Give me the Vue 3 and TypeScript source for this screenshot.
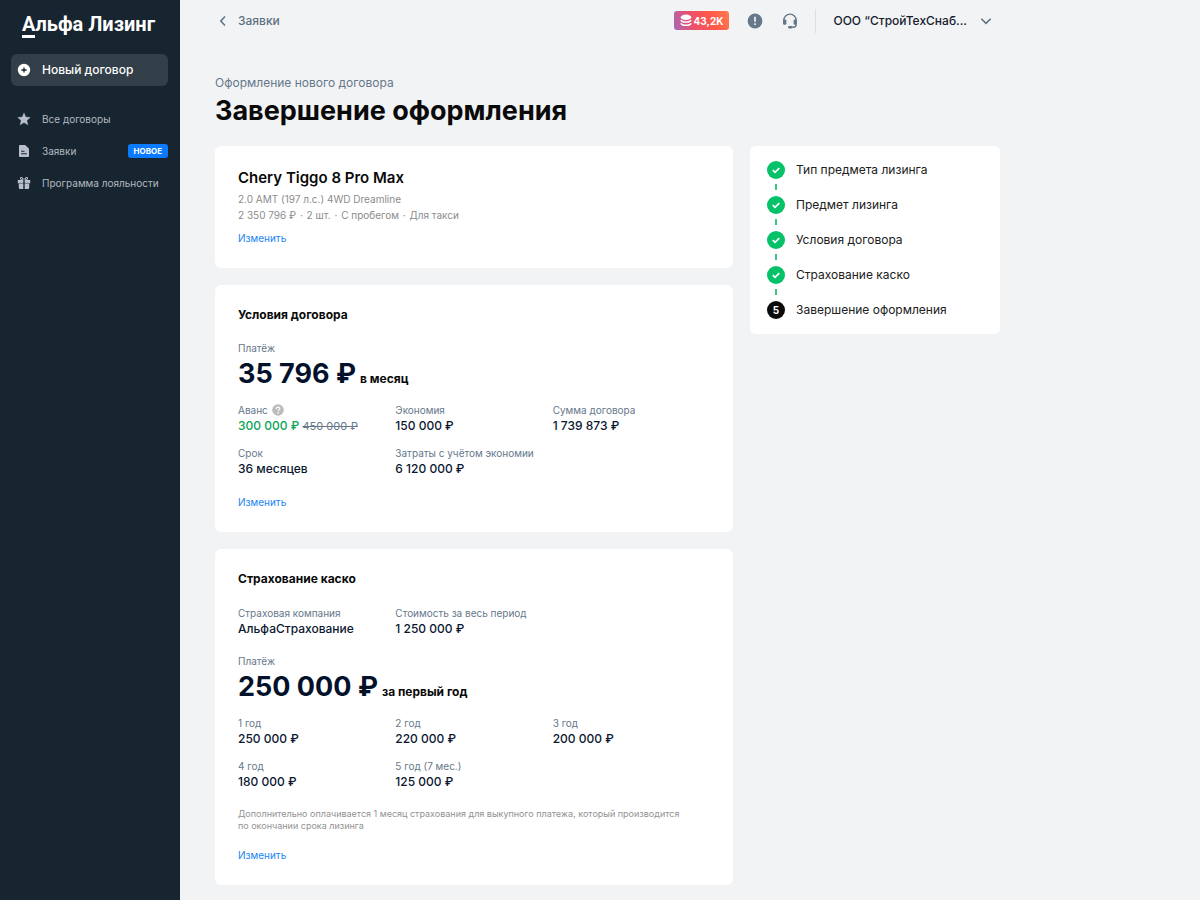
<script setup lang="ts">
interface Field {
  label: string
  value: string
  oldValue?: string
  hint?: boolean
}

const carDetails: string[] = ['2 350 796 ₽', '2 шт.', 'С пробегом', 'Для такси']

const company: Field[] = [
  { label: 'Страховая компания', value: 'АльфаСтрахование' },
  { label: 'Стоимость за весь период', value: '1 250 000 ₽' },
]

const terms: Field[] = [
  { label: 'Аванс', value: '300 000 ₽', oldValue: '450 000 ₽', hint: true },
  { label: 'Экономия', value: '150 000 ₽' },
  { label: 'Сумма договора', value: '1 739 873 ₽' },
  { label: 'Срок', value: '36 месяцев' },
  { label: 'Затраты с учётом экономии', value: '6 120 000 ₽' },
]

const years: Field[] = [
  { label: '1 год', value: '250 000 ₽' },
  { label: '2 год', value: '220 000 ₽' },
  { label: '3 год', value: '200 000 ₽' },
  { label: '4 год', value: '180 000 ₽' },
  { label: '5 год (7 мес.)', value: '125 000 ₽' },
]

const steps: { title: string; done: boolean }[] = [
  { title: 'Тип предмета лизинга', done: true },
  { title: 'Предмет лизинга', done: true },
  { title: 'Условия договора', done: true },
  { title: 'Страхование каско', done: true },
  { title: 'Завершение оформления', done: false },
]
</script>

<template>
  <div class="page">
    <aside class="sidebar">
      <a class="logo" href="#"><span class="logo-first">А</span>льфа Лизинг</a>
      <button class="new-deal" type="button">
        <svg class="nav-icon" viewBox="0 0 14 14" aria-hidden="true">
          <circle cx="7" cy="7" r="6.2" fill="#fff" />
          <path d="M7 4.4v5.2M4.4 7h5.2" stroke="#16252f" stroke-width="1.3" />
        </svg>
        <span>Новый договор</span>
      </button>
      <nav class="nav">
        <a class="nav-item" href="#">
          <svg class="nav-icon" viewBox="0 0 14 14" aria-hidden="true">
            <path d="M7 .9l1.75 4.15 4.45.4-3.4 2.95 1.05 4.4L7 10.45 3.15 12.8l1.05-4.4L.8 5.45l4.45-.4z" fill="#b9c0c9" stroke="#b9c0c9" stroke-width=".4" stroke-linejoin="round" />
          </svg>
          <span>Все договоры</span>
        </a>
        <a class="nav-item" href="#">
          <svg class="nav-icon" viewBox="0 0 14 14" aria-hidden="true">
            <path d="M3 1h5.2L12 4.8V12a1 1 0 0 1-1 1H3a1 1 0 0 1-1-1V2a1 1 0 0 1 1-1z" fill="#b9c0c9" />
            <path d="M4.2 7.3h3.3M4.2 9.8h5.6" stroke="#16252f" stroke-width="1.1" />
          </svg>
          <span>Заявки</span>
          <span class="tag">НОВОЕ</span>
        </a>
        <a class="nav-item" href="#">
          <svg class="nav-icon" viewBox="0 0 14 14" aria-hidden="true">
            <path d="M.8 4.100h5.500V13H3a1.200 1.200 0 0 1-1.200-1.200V7.300h-1zM7.700 4.100h5.500v3.200h-1v4.500A1.200 1.200 0 0 1 11 13H7.700z" fill="#b9c0c9" />
            <path d="M6.700 3.700C6.400 1.900 5.400.9 4.200 1c-1.300.1-1.700 1.900-.6 2.700zM7.300 3.700C7.600 1.900 8.600.9 9.800 1c1.300.1 1.700 1.900.6 2.700z" fill="#b9c0c9" />
            <circle cx="4.500" cy="2.600" r=".6" fill="#16252f" />
            <circle cx="9.500" cy="2.600" r=".6" fill="#16252f" />
            <path d="M1.800 7.300h10.400" stroke="#16252f" stroke-width=".5" />
          </svg>
          <span>Программа лояльности</span>
        </a>
      </nav>
    </aside>

    <div class="main">
      <header class="topbar">
        <a class="back" href="#">
          <svg class="icon-16" viewBox="0 0 16 16" aria-hidden="true">
            <path d="M10 3.5L5.8 8l4.2 4.5" fill="none" stroke="#5d7081" stroke-width="1.5" />
          </svg>
          <span>Заявки</span>
        </a>
        <a class="points" href="#">
          <svg class="coins" viewBox="0 0 12 13" aria-hidden="true">
            <ellipse cx="6" cy="3.3" rx="5.3" ry="2.7" fill="#fff" />
            <path d="M.9 6c.8 2.700 9.400 2.700 10.200 0M.9 9.200c.8 2.700 9.400 2.700 10.200 0" fill="none" stroke="#fff" stroke-width="1.500" />
          </svg>
          <span>43,2K</span>
        </a>
        <button class="icon-button" type="button" aria-label="Уведомления">
          <svg class="icon-16" viewBox="0 0 16 16" aria-hidden="true">
            <circle cx="8" cy="8" r="7.4" fill="#66788a" />
            <path d="M8 3.800v5" stroke="#f2f3f5" stroke-width="1.700" />
            <path d="M8 10.200v1.800" stroke="#f2f3f5" stroke-width="1.700" />
          </svg>
        </button>
        <button class="icon-button" type="button" aria-label="Поддержка">
          <svg class="icon-16" viewBox="0 0 16 16" aria-hidden="true">
            <path d="M1.800 8.500V7.300a6.200 6.200 0 0 1 12.400 0v3.900c0 1.800-1 2.900-2.800 3H8.500" fill="none" stroke="#66788a" stroke-width="1.400" />
            <rect x="1" y="6.400" width="3.400" height="5.400" rx="1.300" fill="#66788a" />
            <rect x="11.600" y="6.400" width="3.400" height="5.400" rx="1.300" fill="#66788a" />
            <rect x="6" y="12.900" width="4.400" height="2.600" rx="1.300" fill="#66788a" />
          </svg>
        </button>
        <button class="account" type="button">
          <span>ООО “СтройТехСнаб...</span>
          <svg class="icon-16" viewBox="0 0 16 16" aria-hidden="true">
            <path d="M3.300 5.700L8 10.400l4.700-4.700" fill="none" stroke="#5d7081" stroke-width="1.500" />
          </svg>
        </button>
      </header>

      <main>
        <p class="overline">Оформление нового договора</p>
        <h1>Завершение оформления</h1>

        <div class="columns">
          <div class="cards">
            <section class="card">
              <h2 class="car">Chery Tiggo 8 Pro Max</h2>
              <p class="details">2.0 AMT (197 л.с.) 4WD Dreamline</p>
              <p class="details">
                <template v-for="(detail, index) in carDetails" :key="detail">
                  <span v-if="index > 0" class="dot"> · </span>{{ detail }}
                </template>
              </p>
              <a class="edit edit-near" href="#">Изменить</a>
            </section>

            <section class="card">
              <h2>Условия договора</h2>
              <p class="label">Платёж</p>
              <p class="payment"><span class="sum">35 796 ₽</span> <span>в месяц</span></p>
              <dl class="fields">
                <div v-for="field in terms" :key="field.label">
                  <dt class="label">
                    {{ field.label }}
                    <svg v-if="field.hint" class="hint" viewBox="0 0 12 12" role="img" aria-label="Подсказка">
                      <circle cx="6" cy="6" r="5.800" fill="#bcbcbc" />
                      <path d="M4.300 4.900c0-2.300 3.500-2.200 3.500-.2 0 1.200-1.700 1.200-1.700 2.600" fill="none" stroke="#fff" stroke-width="1.200" />
                      <circle cx="6.100" cy="8.900" r=".8" fill="#fff" />
                    </svg>
                  </dt>
                  <dd v-if="field.oldValue" class="value">
                    <span class="good">{{ field.value }}</span>&nbsp;<s>{{ field.oldValue }}</s>
                  </dd>
                  <dd v-else class="value">{{ field.value }}</dd>
                </div>
              </dl>
              <a class="edit" href="#">Изменить</a>
            </section>

            <section class="card">
              <h2>Страхование каско</h2>
              <dl class="fields company">
                <div v-for="field in company" :key="field.label">
                  <dt class="label">{{ field.label }}</dt>
                  <dd class="value">{{ field.value }}</dd>
                </div>
              </dl>
              <p class="label">Платёж</p>
              <p class="payment"><span class="sum">250 000 ₽</span> <span>за первый год</span></p>
              <dl class="fields">
                <div v-for="field in years" :key="field.label">
                  <dt class="label">{{ field.label }}</dt>
                  <dd class="value">{{ field.value }}</dd>
                </div>
              </dl>
              <p class="note">
                Дополнительно оплачивается 1 месяц страхования для выкупного платежа, который производится
                по окончании срока лизинга
              </p>
              <a class="edit" href="#">Изменить</a>
            </section>
          </div>

          <ol class="steps">
            <li v-for="(step, index) in steps" :key="step.title" class="step">
              <span class="marker" :class="{ done: step.done }">
                <svg v-if="step.done" class="check" viewBox="0 0 18 18" aria-hidden="true">
                  <path d="M5.800 9.200l2.200 2.200 4.300-4.300" fill="none" stroke="#fff" stroke-width="1.700" />
                </svg>
                <template v-else>{{ index + 1 }}</template>
              </span>
              <span>{{ step.title }}</span>
            </li>
          </ol>
        </div>
      </main>
    </div>
  </div>
</template>

<style>
body {
  margin: 0;
  background: #f2f3f5;
}
</style>

<style scoped>
.page {
  display: flex;
  min-height: 100vh;
  background: #f2f3f5;
  color: #0a0a0a;
  font-family: Inter, "Liberation Sans", sans-serif;
  font-size: 12px;
  line-height: 16px;
}

h1,
h2,
p,
dl,
dd,
ol {
  margin: 0;
  padding: 0;
}

a {
  color: inherit;
  text-decoration: none;
}

button {
  padding: 0;
  border: 0;
  background: none;
  color: inherit;
  font: inherit;
  cursor: pointer;
}

svg {
  display: block;
  flex: none;
}

.sidebar {
  flex: none;
  box-sizing: border-box;
  width: 180px;
  padding: 10px 12px 10px 11px;
  background: #16252f;
  color: #b4bac0;
}

.logo {
  display: block;
  height: 30px;
  margin-left: 11px;
  color: #fff;
  font-family: Roboto, Inter, sans-serif;
  font-size: 20px;
  font-weight: 700;
  line-height: 28px;
  white-space: nowrap;
}

.logo-first {
  display: inline-block;
  border-bottom: 3px solid #fff;
  line-height: 22px;
}

.new-deal {
  display: flex;
  align-items: center;
  gap: 11px;
  width: 100%;
  height: 32px;
  margin-top: 14px;
  padding: 0 6px;
  border-radius: 6px;
  background: #323e48;
  color: #fff;
  font-weight: 500;
}

.nav {
  margin-top: 17px;
}

.nav-item {
  display: flex;
  align-items: center;
  gap: 11px;
  height: 32px;
  padding-left: 6px;
  font-size: 10px;
  white-space: nowrap;
}

.nav-icon {
  width: 14px;
  height: 14px;
}

.tag {
  margin-left: auto;
  padding: 0 6px;
  border-radius: 3px;
  background: #0a7aff;
  color: #fff;
  font-size: 8px;
  font-weight: 700;
  line-height: 14px;
}

.main {
  flex: 1;
  min-width: 0;
  max-width: 785px;
  padding: 0 35px 15px;
}

.topbar {
  display: flex;
  align-items: center;
  height: 41px;
  padding-right: 6px;
}

.icon-16 {
  width: 16px;
  height: 16px;
}

.back {
  display: flex;
  gap: 7px;
  margin-right: auto;
  color: #5d7081;
  font-weight: 500;
}

.points {
  display: flex;
  align-items: center;
  gap: 2px;
  height: 19px;
  padding: 0 6px;
  border-radius: 3px;
  background: linear-gradient(70deg, #a667b8 0%, #ee5068 35%, #ff5a48 70%, #ff7a50 100%);
  color: #fff;
  font-size: 10px;
  font-weight: 700;
}

.coins {
  width: 12px;
  height: 13px;
}

.icon-button {
  margin-left: 18px;
}

.icon-button + .icon-button {
  margin-left: 19px;
}

.account {
  display: flex;
  align-items: center;
  gap: 11px;
  margin-left: 17px;
  padding-left: 17px;
  border-left: 1px solid #dcdfe3;
  color: #15202f;
  font-weight: 500;
  line-height: 24px;
}

.overline {
  margin-top: 34px;
  color: #66788a;
}

h1 {
  margin-top: 2px;
  font-size: 27px;
  font-weight: 700;
  line-height: 36px;
}

.columns {
  display: grid;
  grid-template-columns: minmax(0, 1fr) 250px;
  gap: 17px;
  align-items: start;
  margin-top: 17px;
}

.cards {
  display: grid;
  gap: 17px;
}

.card {
  padding: 22px 23px;
  border-radius: 6px;
  background: #fff;
}

h2 {
  font-size: 12px;
  font-weight: 700;
  line-height: 16px;
}

h2.car {
  margin-bottom: 3px;
  font-size: 15px;
  font-weight: 600;
  line-height: 20px;
}

.details {
  color: #8c8c8c;
  font-size: 10px;
}

.dot {
  margin: 0 1px;
}

.label {
  color: #66788a;
  font-size: 10px;
}

h2 + .label {
  margin-top: 17px;
}

dt.label {
  display: flex;
  align-items: center;
  gap: 4px;
}

.hint {
  width: 12px;
  height: 12px;
}

.payment {
  display: flex;
  align-items: baseline;
  gap: 4px;
  font-weight: 700;
}

.sum {
  color: #04112b;
  font-size: 27px;
  line-height: 36px;
}

.fields {
  display: grid;
  grid-template-columns: repeat(3, minmax(0, 1fr));
  gap: 11px 0;
}

.payment + .fields {
  margin-top: 10px;
}

.company {
  margin: 18px 0 16px;
}

.value {
  color: #0b1730;
  font-weight: 500;
  white-space: nowrap;
}

.good {
  color: #0aa55a;
}

.value s {
  color: #66788a;
  font-size: 11px;
  font-weight: 400;
}

.note {
  max-width: 448px;
  margin-top: 18px;
  color: #929292;
  font-size: 9px;
  line-height: 12px;
}

.edit {
  display: block;
  width: fit-content;
  margin-top: 17px;
  color: #1684f5;
  font-size: 10px;
}

.edit-near {
  margin-top: 7px;
}

.note + .edit {
  margin-top: 15px;
}

.steps {
  display: grid;
  gap: 17px;
  padding: 15px 17px;
  border-radius: 6px;
  background: #fff;
  color: #202020;
  list-style: none;
}

.step {
  display: flex;
  align-items: center;
  gap: 11px;
}

.marker {
  position: relative;
  flex: none;
  width: 18px;
  height: 18px;
  border-radius: 50%;
  background: #0a0a0a;
  color: #fff;
  font-size: 10px;
  font-weight: 700;
  line-height: 18px;
  text-align: center;
}

.marker.done {
  background: #05c167;
}

/* Dash that leads to the following step */
.marker.done::after {
  content: "";
  position: absolute;
  top: 23px;
  left: 8px;
  width: 2px;
  height: 6px;
  background: #3cc585;
}

.check {
  width: 18px;
  height: 18px;
}
</style>
